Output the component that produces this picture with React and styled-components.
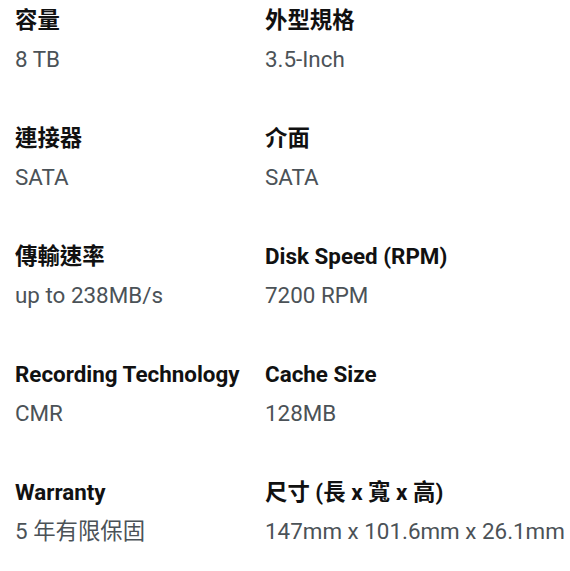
import React from 'react';
import styled, { createGlobalStyle } from 'styled-components';

const specs = [
  { label: '容量', value: '8 TB' },
  { label: '外型規格', value: '3.5-Inch' },
  { label: '連接器', value: 'SATA' },
  { label: '介面', value: 'SATA' },
  { label: '傳輸速率', value: 'up to 238MB/s' },
  { label: 'Disk Speed (RPM)', value: '7200 RPM' },
  { label: 'Recording Technology', value: 'CMR' },
  { label: 'Cache Size', value: '128MB' },
  { label: 'Warranty', value: '5 年有限保固' },
  { label: '尺寸 (長 x 寬 x 高)', value: '147mm x 101.6mm x 26.1mm' },
];

const GlobalStyle = createGlobalStyle`
  body {
    margin: 0;
    background: #fff;
    font-family: Roboto, "Noto Sans CJK TC", sans-serif;
  }
`;

const SpecGrid = styled.dl`
  display: grid;
  grid-template-columns: 250px 1fr;
  row-gap: 51px;
  margin: 0;
  padding: 6px 0 0 15px;
`;

const SpecItem = styled.div`
  display: flex;
  flex-direction: column;
  gap: 11px;
`;

const Label = styled.dt`
  font-size: 22.4px;
  line-height: 28px;
  font-weight: 700;
  color: #111;
  white-space: nowrap;
`;

const Value = styled.dd`
  margin: 0;
  font-size: 22.4px;
  line-height: 28px;
  color: #4b5257;
  white-space: nowrap;
`;

const App = () => (
  <>
    <GlobalStyle />
    <SpecGrid>
      {specs.map((s) => (
        <SpecItem key={s.label}>
          <Label>{s.label}</Label>
          <Value>{s.value}</Value>
        </SpecItem>
      ))}
    </SpecGrid>
  </>
);

export default App;
